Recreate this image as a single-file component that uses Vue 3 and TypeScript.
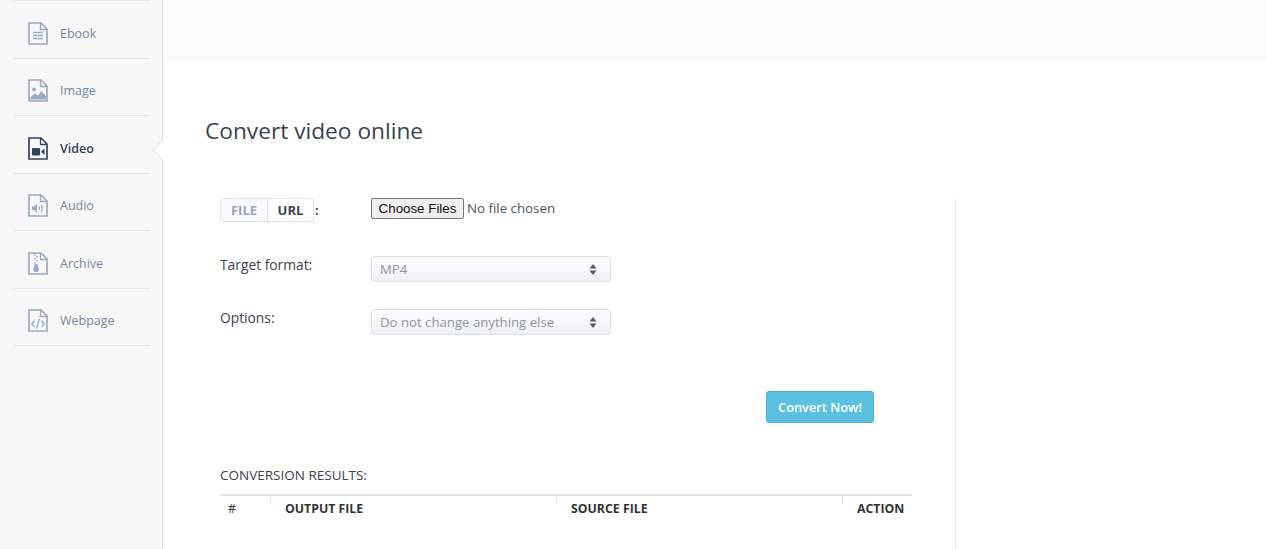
<script setup lang="ts">
const navItems = [
  { label: 'Ebook', kind: 'ebook' },
  { label: 'Image', kind: 'image' },
  { label: 'Video', kind: 'video', active: true },
  { label: 'Audio', kind: 'audio' },
  { label: 'Archive', kind: 'archive' },
  { label: 'Webpage', kind: 'webpage' },
]
const columns = ['#', 'OUTPUT FILE', 'SOURCE FILE', 'ACTION']
</script>

<template>
  <div class="page">
    <aside class="sidebar">
      <ul class="nav">
        <li v-for="item in navItems" :key="item.label" class="nav-item" :class="{ active: item.active }">
          <svg class="icon" width="20" height="23" viewBox="0 0 20 23" fill="none">
            <path d="M1 1H13L19 7V22H1Z" stroke="currentColor" stroke-width="1.7" />
            <path d="M12.5 1V7.5H19" stroke="currentColor" stroke-width="1.3" />
            <g v-if="item.kind === 'ebook'" stroke="currentColor" stroke-width="1.3">
              <path d="M5 10.5H15M5 13.5H15M5 16.5H15" />
            </g>
            <g v-else-if="item.kind === 'image'" fill="currentColor">
              <circle cx="6" cy="10.5" r="2" />
              <path d="M2.5 20.5V18L7 14.5L10 16.5L13.5 12L18 17V20.5Z" />
            </g>
            <g v-else-if="item.kind === 'video'" fill="currentColor">
              <rect x="4" y="11" width="8" height="7.5" rx="0.8" />
              <path d="M13 14.7L16.5 11.5V18Z" />
            </g>
            <g v-else-if="item.kind === 'audio'">
              <path d="M4 12.5H6L9 10V18.5L6 16H4Z" fill="currentColor" />
              <path d="M11 12.3Q12.3 14.2 11 16.2M13 10.8Q15.4 14.2 13 17.8" stroke="currentColor" stroke-width="1.2" />
            </g>
            <g v-else-if="item.kind === 'archive'">
              <path d="M7 2V3.5M9 4V5.5M7 6V7.5M9 8V9.5M7 10V11.5" stroke="currentColor" stroke-width="1.5" />
              <path d="M7 12H9.4L10.8 16.5A2.8 2.8 0 1 1 5.4 16.5Z" fill="currentColor" />
            </g>
            <g v-else stroke="currentColor" stroke-width="1.3">
              <path d="M6.5 11.5L3.8 14.8L6.5 18M13.5 11.5L16.2 14.8L13.5 18M11.5 10L8.5 19.5" />
            </g>
          </svg>
          <span>{{ item.label }}</span>
        </li>
      </ul>
      <span class="notch"></span>
    </aside>

    <main class="main">
      <div class="top-band"></div>
      <h1 class="title">Convert video online</h1>

      <div class="content">
        <form class="panel" @submit.prevent>
          <div class="row first">
            <div class="label source">
              <div class="toggle">
                <span class="toggle-file">FILE</span>
                <span class="toggle-url">URL</span>
              </div>
              <b class="colon">:</b>
            </div>
            <input class="file" type="file" multiple />
          </div>

          <div class="row second">
            <label class="label">Target format:</label>
            <div class="select">
              <span>MP4</span>
              <svg width="8" height="13" viewBox="0 0 8 13" fill="currentColor">
                <path d="M4 1L7.5 5.5H0.5ZM4 12L0.5 7.5H7.5Z" />
              </svg>
            </div>
          </div>

          <div class="row third">
            <label class="label">Options:</label>
            <div class="select">
              <span>Do not change anything else</span>
              <svg width="8" height="13" viewBox="0 0 8 13" fill="currentColor">
                <path d="M4 1L7.5 5.5H0.5ZM4 12L0.5 7.5H7.5Z" />
              </svg>
            </div>
          </div>

          <div class="actions">
            <button class="convert" type="submit">Convert Now!</button>
          </div>

          <h2 class="results">CONVERSION RESULTS:</h2>
          <div class="table-head">
            <div v-for="col in columns" :key="col" class="cell">{{ col }}</div>
          </div>
        </form>
      </div>
    </main>
  </div>
</template>

<style>
html, body { margin: 0; background: #fff; overflow: hidden; }
</style>

<style scoped>
.page {
  display: flex;
  height: 549px;
  overflow: hidden;
  font-family: "Open Sans", "Liberation Sans", sans-serif;
  color: #39424e;
}
.sidebar {
  position: relative;
  flex: 0 0 163px;
  box-sizing: border-box;
  width: 163px;
  padding: 0 12px 0 14px;
  background: #f7f7f7;
  border-right: 1px solid #d9e3ea;
}
.nav { list-style: none; margin: 0; padding: 0; border-top: 1px solid #e2e7ed; }
.nav-item {
  display: flex;
  align-items: center;
  box-sizing: border-box;
  height: 57.5px;
  padding: 8px 0 0 14px;
  border-bottom: 1px solid #dfe5ea;
  color: #76879e;
  font-size: 12.5px;
}
.nav-item .icon { color: #9aabbf; margin-right: 12px; flex: none; }
.nav-item.active { color: #2f3f56; font-weight: 600; }
.nav-item.active .icon { color: #2f4260; }
.notch {
  position: absolute;
  left: 155px;
  top: 143px;
  width: 14px;
  height: 14px;
  background: #fff;
  border-left: 1px solid #d9e3ea;
  border-bottom: 1px solid #d9e3ea;
  transform: rotate(45deg);
  box-sizing: border-box;
}
.main { flex: 1; min-width: 0; position: relative; z-index: 1; }
.top-band { height: 62px; background: #f9f9f9; }
.title {
  margin: 52px 0 0 42px;
  font-size: 22.7px;
  font-weight: 400;
  line-height: 34px;
  color: #39424e;
}
.content { padding: 50px 0 0 57px; }
.panel {
  box-sizing: border-box;
  width: 736px;
  height: 400px;
  padding-right: 43px;
  border-right: 1px solid #eaeaea;
}
.row { display: flex; align-items: flex-start; }
.row.second { margin-top: 34px; }
.row.third { margin-top: 27px; }
.label {
  flex: 0 0 151px;
  font-size: 13.8px;
  line-height: 18px;
  color: #39424e;
}
.source { display: flex; align-items: center; height: 24px; }
.toggle {
  display: flex;
  box-sizing: border-box;
  width: 94px;
  height: 24px;
  border: 1px solid #d8e2ec;
  border-radius: 3px;
  font-size: 13px;
  font-weight: 700;
  line-height: 22px;
  text-align: center;
}
.toggle-file { flex: 0 0 47px; box-sizing: border-box; background: #f8f9fb; color: #94a5bc; border-right: 1px solid #d8e2ec; }
.toggle-url { flex: 1; color: #39424e; }
.colon { margin-left: 1px; font-size: 13px; }
.file {
  font-family: "Open Sans", sans-serif;
  font-size: 13.3px;
  color: #4b5460;
  width: 240px;
  height: 21px;
}
.file::file-selector-button {
  font-family: "Liberation Sans", sans-serif;
  font-size: 13.33px;
  width: 93px;
  height: 21px;
  margin-right: 3px;
  padding: 0;
  color: #111;
  background: #efefef;
  border: 1px solid #767676;
  border-radius: 2px;
}
.select {
  display: flex;
  align-items: center;
  justify-content: space-between;
  box-sizing: border-box;
  width: 240px;
  height: 26px;
  padding: 0 13px 0 8px;
  border: 1px solid #d5e0ea;
  border-radius: 4px;
  background: linear-gradient(#fdfdfe, #eef1f4);
  color: #8d96a2;
  font-size: 13.2px;
}
.select svg { color: #555d68; }
.actions { display: flex; justify-content: flex-end; margin: 56px 38px 0 0; }
.convert {
  width: 108px;
  height: 32px;
  padding: 0;
  border: 1px solid #46b4d6;
  border-radius: 3px;
  background: #5bc0de;
  color: #fff;
  font-family: "Open Sans", sans-serif;
  font-size: 12.8px;
  font-weight: 600;
}
.results {
  margin: 43px 0 0;
  font-size: 13.5px;
  font-weight: 400;
  line-height: 18px;
  color: #39424e;
}
.table-head {
  display: grid;
  grid-template-columns: 50px 286px 286px 70px;
  width: 692px;
  margin-top: 10px;
  border-top: 2px solid #e2e2e2;
}
.cell {
  position: relative;
  padding: 4px 8px 0 15px;
  font-size: 12.3px;
  font-weight: 700;
  line-height: 18px;
  color: #333;
}
.cell:first-child { padding-left: 8px; font-weight: 400; }
.cell:last-child { padding-left: 15px; padding-right: 0; }
.cell:not(:first-child)::before {
  content: "";
  position: absolute;
  left: 0;
  top: 0;
  height: 8px;
  border-left: 1px solid #e4e4e4;
}
</style>
